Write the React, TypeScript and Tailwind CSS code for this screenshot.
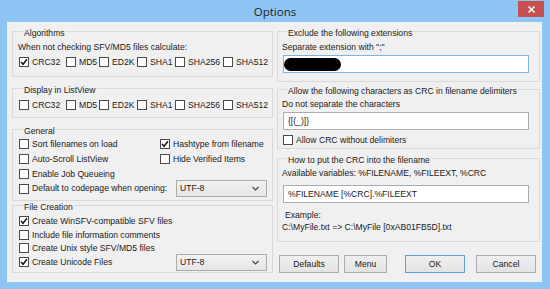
import React from "react";

function Check({ checked = false, label, className = "" }: { checked?: boolean; label: string; className?: string }) {
  return (
    <div className={`flex items-center h-[10px] ${className}`}>
      <div className="w-[10px] h-[10px] shrink-0 border border-[#4a4a4a] bg-white flex items-center justify-center">
        {checked && (
          <svg width="8" height="8" viewBox="0 0 8 8">
            <polyline points="1,4 3,6.3 7,1.2" fill="none" stroke="#111" strokeWidth="1.4" />
          </svg>
        )}
      </div>
      <span className="ml-[3px] leading-[11px] whitespace-nowrap">{label}</span>
    </div>
  );
}

function Group({ title, className = "", children }: { title: string; className?: string; children?: React.ReactNode }) {
  return (
    <div className={`border border-[#d9d9d9] flex flex-col ${className}`}>
      <div className="-mt-[4px] ml-[4px] w-fit px-[1px] bg-[#f0f0f0] leading-[11px] whitespace-nowrap">{title}</div>
      {children}
    </div>
  );
}

function Select({ className = "" }: { className?: string }) {
  return (
    <div className={`w-[91px] h-[17px] shrink-0 border border-[#acacac] bg-gradient-to-b from-[#f2f2f2] to-[#e5e5e5] flex items-center pl-[3px] pr-[7px] ${className}`}>
      <span className="leading-[11px] flex-1">UTF-8</span>
      <svg width="7" height="5" viewBox="0 0 7 5">
        <polyline points="0.5,1 3.5,4 6.5,1" fill="none" stroke="#444" strokeWidth="1.2" />
      </svg>
    </div>
  );
}

function AlgoRow({ first = false }: { first?: boolean }) {
  return (
    <div className="flex">
      <Check checked={first} label="CRC32" className="w-[47px]" />
      <Check label="MD5" className="w-[33px]" />
      <Check label="ED2K" className="w-[38px]" />
      <Check label="SHA1" className="w-[38px]" />
      <Check label="SHA256" className="w-[48px]" />
      <Check label="SHA512" />
    </div>
  );
}

function Button({ label, className = "" }: { label: string; className?: string }) {
  return (
    <div className={`h-[18px] border bg-gradient-to-b from-[#f0f0f0] to-[#e3e3e3] flex items-center justify-center leading-[11px] ${className}`}>
      {label}
    </div>
  );
}

export default function App() {
  return (
    <div className="w-[550px] h-[289px] bg-[#8fc5f4] flex flex-col font-['Liberation_Sans',Arial,sans-serif] text-[8.6px] text-[#1a1a1a] relative overflow-hidden">
      <div className="h-[22px] flex items-center justify-center">
        <span className="font-['Open_Sans',sans-serif] text-[11.5px] text-[#222] mt-[2px]">Options</span>
      </div>
      <div className="absolute left-[518px] top-[1px] w-[26px] h-[16px] bg-[#c75050] flex items-center justify-center">
        <svg width="7" height="7" viewBox="0 0 7 7">
          <line x1="0.5" y1="0.5" x2="6.5" y2="6.5" stroke="#fff" strokeWidth="1.5" />
          <line x1="6.5" y1="0.5" x2="0.5" y2="6.5" stroke="#fff" strokeWidth="1.5" />
        </svg>
      </div>
      <div className="ml-[7px] w-[535px] h-[260px] bg-[#f0f0f0] flex pl-[5px] pt-[9px] gap-[4px]">
        {/* Left column */}
        <div className="w-[261px] flex flex-col">
          <Group title="Algorithms" className="h-[46px] pl-[6px]">
            <div className="mt-[3px] -ml-[1px] leading-[11px] whitespace-nowrap">When not checking SFV/MD5 files calculate:</div>
            <div className="mt-[4px]">
              <AlgoRow first />
            </div>
          </Group>
          <Group title="Display in ListView" className="mt-[11px] h-[30px] pl-[6px]">
            <div className="mt-[4px]">
              <AlgoRow />
            </div>
          </Group>
          <Group title="General" className="mt-[11px] h-[72px] pl-[6px]">
            <div className="mt-[2px] grid grid-cols-[141px_1fr] gap-y-[5px]">
              <Check label="Sort filenames on load" />
              <Check checked label="Hashtype from filename" />
              <Check label="Auto-Scroll ListView" />
              <Check label="Hide Verified Items" />
              <Check label="Enable Job Queueing" />
              <div />
            </div>
            <div className="mt-[1px] h-[17px] flex items-center">
              <Check label="Default to codepage when opening:" className="w-[157px]" />
              <Select />
            </div>
          </Group>
          <Group title="File Creation" className="mt-[4px] h-[68px] pl-[6px]">
            <Check checked label="Create WinSFV-compatible SFV files" className="mt-[3px]" />
            <Check label="Include file information comments" className="mt-[4px]" />
            <Check label="Create Unix style SFV/MD5 files" className="mt-[3px]" />
            <div className="mt-[4px] h-[10px] flex items-center">
              <Check checked label="Create Unicode Files" className="w-[157px]" />
              <Select />
            </div>
          </Group>
        </div>
        {/* Right column */}
        <div className="w-[263px] flex flex-col">
          <Group title="Exclude the following extensions" className="h-[51px] pl-[5px]">
            <div className="mt-[3px] -ml-[1px] leading-[11px] whitespace-nowrap">Separate extension with ";"</div>
            <div className="mt-[2px] w-[246px] h-[18px] border border-[#7eb4ea] bg-white flex items-center">
              <div className="w-[57px] h-[13px] rounded-[7px] bg-black" />
            </div>
          </Group>
          <Group title="Allow the following characters as CRC in filename delimiters" className="mt-[7px] h-[60px] pl-[5px]">
            <div className="mt-[2px] -ml-[1px] leading-[11px] whitespace-nowrap">Do not separate the characters</div>
            <div className="mt-[2px] w-[246px] h-[18px] border border-[#abadb3] bg-white flex items-center pl-[4px] leading-[11px]">
              {"{[(_)]}"}
            </div>
            <Check label="Allow CRC without delimiters" className="mt-[5px]" />
          </Group>
          <Group title="How to put the CRC into the filename" className="mt-[9px] h-[84px] pl-[5px]">
            <div className="mt-[2px] -ml-[1px] leading-[11px] whitespace-nowrap">Available variables: %FILENAME, %FILEEXT, %CRC</div>
            <div className="mt-[6px] w-[246px] h-[18px] border border-[#abadb3] bg-white flex items-center pl-[4px] leading-[11px]">
              %FILENAME [%CRC].%FILEEXT
            </div>
            <div className="mt-[7px] ml-[2px] leading-[11px]">Example:</div>
            <div className="mt-[1px] -ml-[1px] leading-[11px] whitespace-nowrap">C:\MyFile.txt =&gt; C:\MyFile [0xAB01FB5D].txt</div>
          </Group>
          <div className="mt-[13px] flex">
            <Button label="Defaults" className="ml-[2px] w-[60px] border-[#acacac]" />
            <Button label="Menu" className="ml-[5px] w-[43px] border-[#acacac]" />
            <Button label="OK" className="ml-[18px] w-[60px] border-[#5aa2e6]" />
            <Button label="Cancel" className="ml-[11px] w-[60px] border-[#acacac]" />
          </div>
        </div>
      </div>
    </div>
  );
}
